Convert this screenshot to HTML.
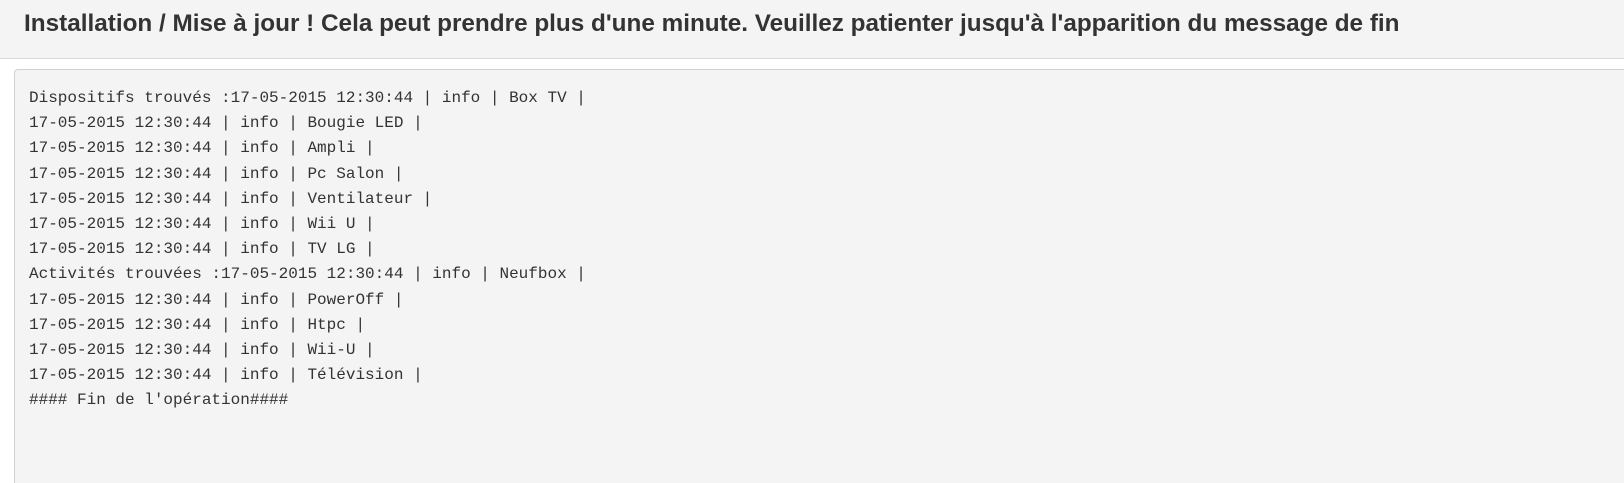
<!DOCTYPE html>
<html><head><meta charset="utf-8"><style>
html,body{margin:0;padding:0;width:1624px;height:483px;overflow:hidden;background:#fff;position:relative;}
.hdr{position:absolute;left:0;top:0;width:1624px;height:58px;background:#f4f4f4;border-bottom:1px solid #d9d9d9;}
.hdr h1{position:absolute;left:24px;top:10px;margin:0;font:bold 24.3px/28px "Liberation Sans",Arial,sans-serif;color:#333;white-space:nowrap;}
.box{position:absolute;left:14px;top:69px;width:1640px;height:414px;background:#f4f4f4;border:1px solid #d0d0d0;border-bottom:none;border-radius:4px 0 0 0;box-sizing:border-box;}
pre{position:absolute;left:14px;top:16px;margin:0;font:16px/25.2px "Liberation Mono","DejaVu Sans Mono",monospace;color:#333;}
</style></head><body>
<div class="hdr"><h1>Installation / Mise à jour ! Cela peut prendre plus d'une minute. Veuillez patienter jusqu'à l'apparition du message de fin</h1></div>
<div class="box"><pre>Dispositifs trouvés :17-05-2015 12:30:44 | info | Box TV |
17-05-2015 12:30:44 | info | Bougie LED |
17-05-2015 12:30:44 | info | Ampli |
17-05-2015 12:30:44 | info | Pc Salon |
17-05-2015 12:30:44 | info | Ventilateur |
17-05-2015 12:30:44 | info | Wii U |
17-05-2015 12:30:44 | info | TV LG |
Activités trouvées :17-05-2015 12:30:44 | info | Neufbox |
17-05-2015 12:30:44 | info | PowerOff |
17-05-2015 12:30:44 | info | Htpc |
17-05-2015 12:30:44 | info | Wii-U |
17-05-2015 12:30:44 | info | Télévision |
#### Fin de l'opération####</pre></div>
</body></html>
